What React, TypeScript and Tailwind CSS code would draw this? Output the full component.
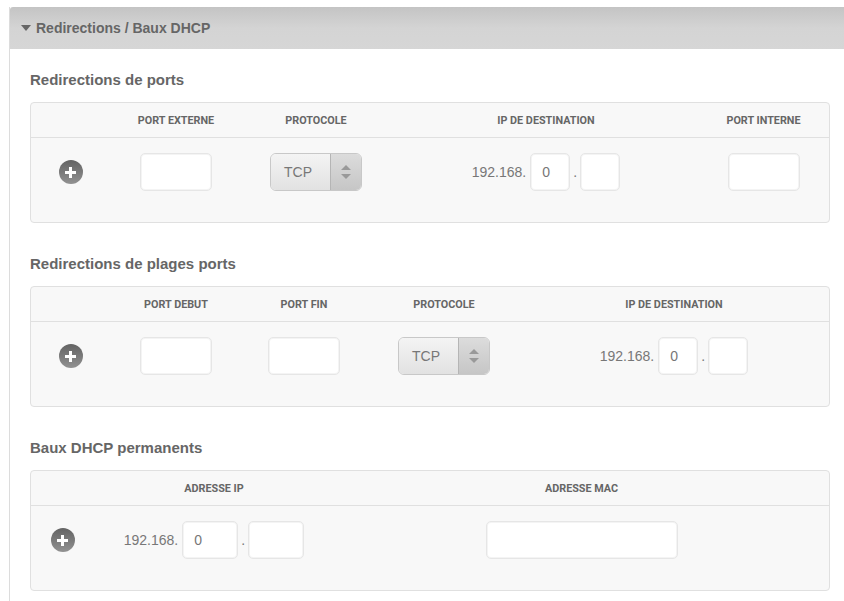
import React from "react";

function PlusButton() {
  return (
    <div className="w-6 h-6 rounded-full bg-gradient-to-b from-[#636363] to-[#929292] flex items-center justify-center">
      <svg width="13" height="13" viewBox="0 0 13 13">
        <path d="M5 1h3v4h4v3H8v4H5V8H1V5h4z" fill="#fff" />
      </svg>
    </div>
  );
}

function TextInput({ width, value }: { width: string; value?: string }) {
  return (
    <div className={`${width} h-[38px] bg-white border border-[#e6e6e6] shadow-[inset_0_0_0_1px_#f4f4f4] rounded-[5px] flex items-center pl-[11px] text-[14px] text-[#777]`}>
      {value}
    </div>
  );
}

function ProtocolSelect() {
  return (
    <div className="w-[92px] h-[38px] flex rounded-[6px] border border-[#c8c8c8] overflow-hidden">
      <div className="flex-1 bg-gradient-to-b from-[#f4f4f4] to-[#e2e2e2] flex items-center pl-[13px] text-[14px] text-[#777]">
        TCP
      </div>
      <div className="w-[31px] border-l border-[#b5b5b5] bg-gradient-to-b from-[#dcdcdc] to-[#c6c6c6] flex flex-col items-center justify-center gap-[4px]">
        <div className="w-0 h-0 border-x-[5px] border-x-transparent border-b-[5px] border-b-[#999]" />
        <div className="w-0 h-0 border-x-[5px] border-x-transparent border-t-[5px] border-t-[#999]" />
      </div>
    </div>
  );
}

function IpField({ width, gap }: { width: string; gap: string }) {
  return (
    <div className="flex items-center text-[14px] text-[#777]">
      <span className="mr-[4px]">192.168.</span>
      <TextInput width={width} value="0" />
      <span className={`${gap} text-center`}>.</span>
      <TextInput width={width} />
    </div>
  );
}

function Section({
  title,
  columns,
  headers,
  cells,
}: {
  title: string;
  columns: string;
  headers: string[];
  cells: React.ReactNode[];
}) {
  return (
    <section className="mb-[25px]">
      <h3 className="h-[38px] pt-[6px] text-[15px] leading-[20px] font-bold text-[#666]">{title}</h3>
      <div className="h-[121px] w-[800px] bg-[#f8f8f8] border border-[#e0e0e0] rounded-[4px]">
        <div className={`grid ${columns} h-[35px] pt-[2px] border-b border-[#e0e0e0] items-center`}>
          {headers.map((header, i) => (
            <div key={i} className="text-center text-[10.8px] font-bold text-[#666] font-['Roboto',sans-serif] uppercase">
              {header}
            </div>
          ))}
        </div>
        <div className={`grid ${columns} pt-[15px]`}>
          {cells.map((cell, i) => (
            <div key={i} className="flex justify-center items-center h-[38px]">
              {cell}
            </div>
          ))}
        </div>
      </div>
    </section>
  );
}

export default function App() {
  return (
    <div className="w-[844px] h-[601px] overflow-hidden bg-white pt-[7px] pl-[9px] font-['Liberation_Sans',Arial,sans-serif]">
      <div className="h-[594px] border-l border-[#dcdcdc]">
        <div className="h-[42px] bg-gradient-to-b from-[#c4c4c4] via-[#d4d4d4] to-[#d6d6d6] rounded-tl-[3px] flex items-center pl-[11px] gap-[5px]">
          <div className="w-0 h-0 border-x-[5px] border-x-transparent border-t-[6px] border-t-[#666]" />
          <span className="text-[14px] font-bold text-[#666]">Redirections / Baux DHCP</span>
        </div>
        <div className="pl-[20px] pt-[15px]">
          <Section
            title="Redirections de ports"
            columns="grid-cols-[79px_132px_148px_312px_123px]"
            headers={["", "Port externe", "Protocole", "IP de destination", "Port interne"]}
            cells={[
              <PlusButton />,
              <TextInput width="w-[72px]" />,
              <ProtocolSelect />,
              <IpField width="w-[40px]" gap="w-[10px]" />,
              <TextInput width="w-[72px]" />,
            ]}
          />
          <Section
            title="Redirections de plages ports"
            columns="grid-cols-[79px_132px_124px_156px_304px]"
            headers={["", "Port debut", "Port fin", "Protocole", "IP de destination"]}
            cells={[
              <PlusButton />,
              <TextInput width="w-[72px]" />,
              <TextInput width="w-[72px]" />,
              <ProtocolSelect />,
              <IpField width="w-[40px]" gap="w-[10px]" />,
            ]}
          />
          <Section
            title="Baux DHCP permanents"
            columns="grid-cols-[63px_240px_495px]"
            headers={["", "Adresse IP", "Adresse MAC"]}
            cells={[
              <PlusButton />,
              <IpField width="w-[56px]" gap="w-[10px]" />,
              <TextInput width="w-[192px]" />,
            ]}
          />
        </div>
      </div>
    </div>
  );
}
